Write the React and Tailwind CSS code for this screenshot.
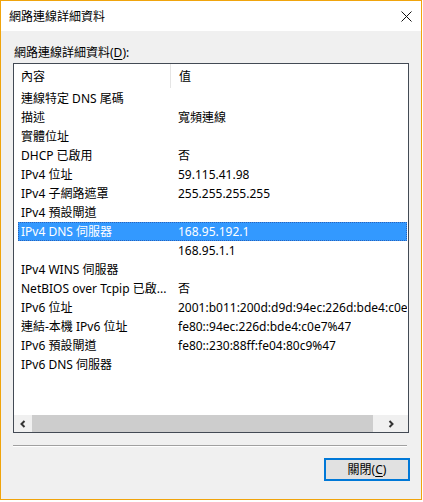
import React from 'react';

const rows = [
    ['連線特定 DNS 尾碼', ''],
    ['描述', '寬頻連線'],
    ['實體位址', ''],
    ['DHCP 已啟用', '否'],
    ['IPv4 位址', '59.115.41.98'],
    ['IPv4 子網路遮罩', '255.255.255.255'],
    ['IPv4 預設閘道', ''],
    ['IPv4 DNS 伺服器', '168.95.192.1'],
    ['', '168.95.1.1'],
    ['IPv4 WINS 伺服器', ''],
    ['NetBIOS over Tcpip 已啟...', '否'],
    ['IPv6 位址', '2001:b011:200d:d9d:94ec:226d:bde4:c0e7'],
    ['連結-本機 IPv6 位址', 'fe80::94ec:226d:bde4:c0e7%47'],
    ['IPv6 預設閘道', 'fe80::230:88ff:fe04:80c9%47'],
    ['IPv6 DNS 伺服器', ''],
];

const selected = 7;

export default function App() {
    return (
        <div className="w-[423px] h-[502px] bg-white text-[12px] text-black" style={{ fontFamily: '"Noto Sans", "Noto Sans CJK TC", sans-serif' }}>
            <div className="w-[422px] h-[500px] border border-[#f0a40c] flex flex-col">
                {/* Title bar */}
                <div className="h-[30px] bg-white flex items-center pl-[8px] pr-[9px] shrink-0">
                    <span className="leading-[16px] mt-[1px]">網路連線詳細資料</span>
                    <svg className="ml-auto" width="11" height="11" viewBox="0 0 11 11">
                        <path d="M0.5 0.5 L10.5 10.5 M10.5 0.5 L0.5 10.5" stroke="#111" strokeWidth="1" fill="none" />
                    </svg>
                </div>

                {/* Body */}
                <div className="flex-1 bg-[#f0f0f0] flex flex-col pl-[12px] pr-[12px]">
                    <div className="mt-[14px] pl-[1px] leading-[16px]">
                        網路連線詳細資料(<span className="underline underline-offset-2">D</span>):
                    </div>

                    <div className="mt-[2px] h-[370px] border border-[#434a54] bg-white flex flex-col overflow-hidden">
                        {/* Header */}
                        <div className="h-[25px] flex items-center shrink-0">
                            <span className="pl-[7px] w-[156px]">內容</span>
                            <span className="w-px h-[24px] bg-[#e5e5e5] mt-[-1px]"></span>
                            <span className="pl-[8px]">值</span>
                        </div>

                        {rows.map((r, i) => (
                            <div
                                key={i}
                                className={`h-[19px] ml-[4px] mr-[1px] flex items-center leading-[19px] whitespace-nowrap shrink-0 ${
                                    i === selected ? 'bg-[#3399ff] text-white border border-dotted border-[#2c63b8]' : ''
                                }`}
                            >
                                <span className={`shrink-0 overflow-hidden ${i === selected ? 'pl-[2px] w-[159px]' : 'pl-[3px] w-[160px]'}`}>{r[0]}</span>
                                <span className="overflow-hidden">{r[1]}</span>
                            </div>
                        ))}

                        <div className="flex-1"></div>

                        {/* Horizontal scrollbar */}
                        <div className="h-[17px] flex bg-[#f0f0f0] shrink-0">
                            <div className="w-[18px] flex items-center justify-center">
                                <svg width="8" height="8" viewBox="0 0 8 8">
                                    <path d="M5.5 1 L2.5 4 L5.5 7" stroke="#333" strokeWidth="2" fill="none" />
                                </svg>
                            </div>
                            <div className="w-[341px] h-full bg-[#cdcdcd]"></div>
                            <div className="flex-1 flex items-center justify-center">
                                <svg width="8" height="8" viewBox="0 0 8 8">
                                    <path d="M2.5 1 L5.5 4 L2.5 7" stroke="#333" strokeWidth="2" fill="none" />
                                </svg>
                            </div>
                        </div>
                    </div>

                    {/* Separator */}
                    <div className="mt-[12px] mr-[2px] border-t border-[#a0a0a0] border-b border-b-white"></div>

                    {/* Button */}
                    <div className="mt-[11px] flex justify-end mr-[-1px]">
                        <button className="w-[86px] h-[23px] border-2 border-[#0078d7] bg-[#e1e1e1] flex items-center justify-center leading-[16px]">
                            關閉(<span className="underline underline-offset-2">C</span>)
                        </button>
                    </div>
                </div>
            </div>
        </div>
    );
}
